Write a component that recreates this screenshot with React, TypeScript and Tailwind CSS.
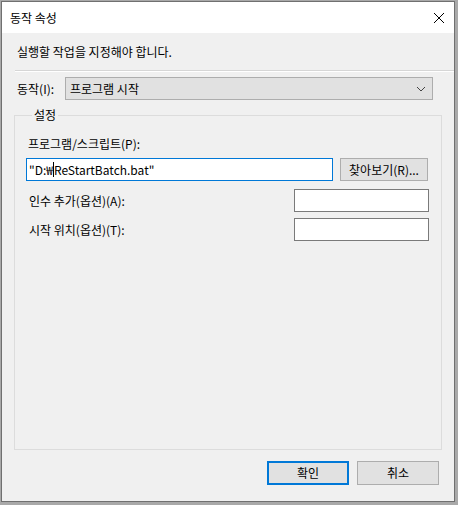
export default function App() {
  const font = { fontFamily: '"Noto Sans CJK KR", "Noto Sans", sans-serif' };

  return (
    <div
      className="w-[458px] h-[505px] bg-[#a9a9a9] pt-[1px] pl-[1px] text-[12px] leading-[16px] text-black"
      style={font}
    >
      <div className="w-[454px] h-[501px] border border-[#707070] bg-[#f0f0f0] flex flex-col">
        {/* Title bar */}
        <div className="h-[31px] shrink-0 bg-white flex items-center justify-between pl-[8px] pr-[8px]">
          <span className="text-[12px]">동작 속성</span>
          <svg width="12" height="12" viewBox="0 0 12 12" className="mr-[1px]">
            <path d="M1 1 L11 11 M11 1 L1 11" stroke="#000" strokeWidth="1" />
          </svg>
        </div>

        {/* Description */}
        <div className="pl-[15px] pt-[11px] h-[37px]">실행할 작업을 지정해야 합니다.</div>

        {/* Separator */}
        <div className="ml-[13px] h-[2px] border-t border-[#d6d6d6] border-b border-b-white" />

        {/* Action row */}
        <div className="flex items-center mt-[5px] pl-[15px]">
          <span className="w-[48px]">동작(I):</span>
          <div className="w-[368px] h-[23px] bg-[#e1e1e1] border border-[#adadad] flex items-center justify-between pl-[4px] pr-[6px]">
            <span>프로그램 시작</span>
            <svg width="10" height="6" viewBox="0 0 10 6">
              <polyline points="1,1 5,5 9,1" fill="none" stroke="#444" strokeWidth="1" />
            </svg>
          </div>
        </div>

        {/* Settings group */}
        <fieldset className="ml-[12px] mt-[7px] w-[428px] h-[343px] border border-[#dcdcdc] pl-[11px] pr-[12px]">
          <legend className="ml-[6px] px-[2px]">설정</legend>
          <div className="mt-[13px] pl-[2px]">프로그램/스크립트(P):</div>
          <div className="flex items-center mt-[6px]">
            <div className="w-[307px] h-[23px] bg-white border border-[#0078d7] flex items-center pl-[2px]">
              <span>"D:₩</span>
              <span className="inline-block w-[1px] h-[15px] bg-black" />
              <span>ReStartBatch.bat"</span>
            </div>
            <div className="ml-[7px] w-[88px] h-[23px] bg-[#e1e1e1] border border-[#adadad] flex items-center justify-center">
              찾아보기(R)...
            </div>
          </div>
          <div className="flex items-center justify-between mt-[8px] pl-[3px]">
            <span>인수 추가(옵션)(A):</span>
            <div className="w-[135px] h-[23px] bg-white border border-[#7a7a7a]" />
          </div>
          <div className="flex items-center justify-between mt-[6px] pl-[3px]">
            <span>시작 위치(옵션)(T):</span>
            <div className="w-[135px] h-[23px] bg-white border border-[#7a7a7a]" />
          </div>
        </fieldset>

        {/* Buttons */}
        <div className="flex justify-end gap-[8px] mt-[11px] pr-[15px]">
          <div className="w-[82px] h-[24px] bg-[#e1e1e1] border-2 border-[#0078d7] flex items-center justify-center">
            확인
          </div>
          <div className="w-[82px] h-[24px] bg-[#e1e1e1] border border-[#adadad] flex items-center justify-center">
            취소
          </div>
        </div>
      </div>
    </div>
  );
}
